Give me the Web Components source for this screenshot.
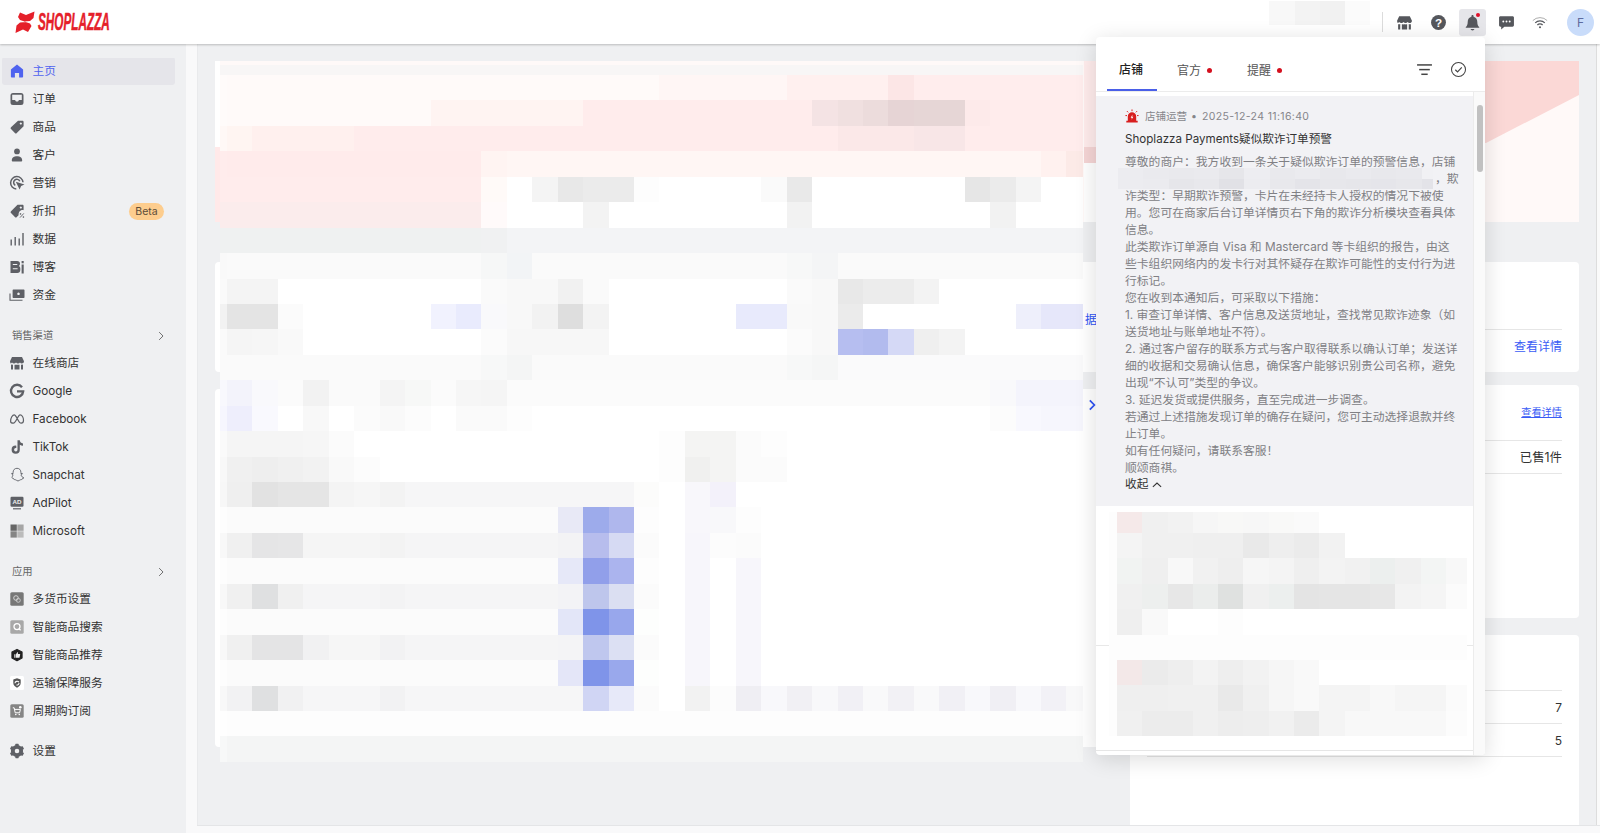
<!DOCTYPE html>
<html lang="zh-CN">
<head>
<meta charset="UTF-8">
<title>Shoplazza</title>
<style>
  html, body { margin: 0; height: 100%; overflow: hidden; }
  body { font: 12px/17px Inter, "Noto Sans CJK SC", sans-serif; color: #333; }
</style>
</head>
<body>
<sp-app>
  <sp-header slot="header"></sp-header>
  <sp-sidebar slot="sidebar">
    <sp-nav-item icon="home" active>主页</sp-nav-item>
    <sp-nav-item icon="orders">订单</sp-nav-item>
    <sp-nav-item icon="tag">商品</sp-nav-item>
    <sp-nav-item icon="person">客户</sp-nav-item>
    <sp-nav-item icon="marketing">营销</sp-nav-item>
    <sp-nav-item icon="discount">折扣<sp-badge slot="badge">Beta</sp-badge></sp-nav-item>
    <sp-nav-item icon="data">数据</sp-nav-item>
    <sp-nav-item icon="blog">博客</sp-nav-item>
    <sp-nav-item icon="funds">资金</sp-nav-item>
    <sp-nav-section>销售渠道</sp-nav-section>
    <sp-nav-item icon="store">在线商店</sp-nav-item>
    <sp-nav-item icon="google">Google</sp-nav-item>
    <sp-nav-item icon="meta">Facebook</sp-nav-item>
    <sp-nav-item icon="tiktok">TikTok</sp-nav-item>
    <sp-nav-item icon="snapchat">Snapchat</sp-nav-item>
    <sp-nav-item icon="adpilot">AdPilot</sp-nav-item>
    <sp-nav-item icon="microsoft">Microsoft</sp-nav-item>
    <sp-nav-section>应用</sp-nav-section>
    <sp-nav-item icon="currency">多货币设置</sp-nav-item>
    <sp-nav-item icon="search">智能商品搜索</sp-nav-item>
    <sp-nav-item icon="recommend">智能商品推荐</sp-nav-item>
    <sp-nav-item icon="shipping">运输保障服务</sp-nav-item>
    <sp-nav-item icon="subscribe">周期购订阅</sp-nav-item>
    <sp-nav-item icon="gear" class="settings">设置</sp-nav-item>
  </sp-sidebar>
  <sp-dashboard slot="main"></sp-dashboard>
  <sp-notice-popup slot="popup"></sp-notice-popup>
</sp-app>

<script>
// 图标，viewBox 都是 0 0 16 16
const gearTeeth = [0, 60, 120, 180, 240, 300].map(a => `<rect x="6.3" y=".8" width="3.4" height="3" rx=".6" transform="rotate(${a} 8 8)"/>`).join("");
const ICONS = {
  home: `<path d="M8 1.6 2.2 6.2a.8.8 0 0 0-.3.6v7c0 .5.3.8.8.8h3.2V10h4.2v4.6h3.2c.5 0 .8-.3.8-.8v-7a.8.8 0 0 0-.3-.6z"/>`,
  orders: `<path fill-rule="evenodd" d="M4 2h8a2.5 2.5 0 0 1 2.5 2.5v7A2.5 2.5 0 0 1 12 14H4a2.5 2.5 0 0 1-2.5-2.5v-7A2.5 2.5 0 0 1 4 2zM3.2 3.8V9H6l1 1.5h2L10 9h2.8V3.8z"/>`,
  tag: `<path fill-rule="evenodd" d="M9 1.8h4.4c.7 0 1.2.5 1.2 1.2v4.3L7.8 14a1.3 1.3 0 0 1-1.9 0L2 10.1a1.3 1.3 0 0 1 0-1.9zM11.8 3.4a1.1 1.1 0 1 0 .01 0z"/>`,
  person: `<circle cx="8" cy="4.4" r="2.9"/><path d="M2.8 13.4c0-2.9 2.3-4.2 5.2-4.2s5.2 1.3 5.2 4.2c0 .7-.5 1.1-1.1 1.1H3.900c-.6 0-1.100-.4-1.100-1.100z"/>`,
  marketing: `<path fill="none" stroke="currentColor" stroke-width="1.5" d="M7.300 14A6.200 6.200 0 1 1 14 7.300"/><path fill="none" stroke="currentColor" stroke-width="1.500" d="M6.300 10.300A3.200 3.200 0 1 1 10.800 6.300"/><path d="M6.800 6.800 15.500 9.600l-3.400 1.400-1.500 3.600z"/>`,
  discount: `<path d="M8.500 1.800h5c.6 0 1.100.5 1.100 1.100v4.300c-2.500-.6-5.300 1.400-5 5l-1.800 1.800a1.300 1.300 0 0 1-1.900 0L2 10.100a1.300 1.300 0 0 1 0-1.900zM11.800 3.400a1.100 1.100 0 1 0 .01 0z" fill-rule="evenodd"/><path fill="none" stroke="currentColor" stroke-width=".9" d="M11 14.600l3.800-4.200M11.200 10.600h.7v.7h-.7zM14 13.700h.7v.7H14z"/>`,
  data: `<rect x="1.500" y="8.500" width="1.400" height="6"/><rect x="5.500" y="6" width="1.400" height="8.500"/><rect x="9.500" y="7.500" width="1.400" height="7"/><rect x="13.300" y="2" width="1.400" height="12.500"/>`,
  blog: `<path fill-rule="evenodd" d="M1.500 2h6.700c1.700 0 2.800 1 2.800 2.800 0 1-.4 1.800-1.100 2.300.9.500 1.400 1.400 1.400 2.500v1.400c0 1.800-1.200 3-3 3H1.500zM3.800 5v1h4.500V5zM3.800 9.200v1h4.800v-1z"/><rect x="12.600" y="2" width="2.100" height="2.300"/><rect x="12.600" y="5.500" width="2.100" height="9"/>`,
  funds: `<path fill-rule="evenodd" d="M4.300 2.500h10.500c.4 0 .7.300.7.700v7.100c0 .4-.3.7-.7.7H4.300a.7.700 0 0 1-.7-.7V3.200c0-.4.300-.7.700-.7zM9.500 5.500a1.300 1.300 0 1 0 .01 0z"/><path fill="none" stroke="currentColor" stroke-width="1.100" d="M1 6.500v6.800h12.500"/>`,
  store: `<path d="M3 2h10l2 4.300c0 1.400-1.100 2.200-2.200 2.200-.8 0-1.400-.4-1.800-1-.5.600-1.200 1-2 1s-1.500-.4-2-1c-.4.600-1.100 1-2 1s-1.500-.4-2-1c-.4.600-1 1-1.800 1C2.100 8.500 1 7.700 1 6.300z"/><path d="M2 9.600c.6.200 1.300.2 2-.1v5H2zM12 9.500c.7.300 1.400.3 2 .1v4.900h-2zM5.500 9.700c.8.200 1.700.2 2.500 0 .8.200 1.700.2 2.500 0v4.800h-5z"/>`,
  google: `<path fill="none" stroke="currentColor" stroke-width="2.300" d="M13 4.200A6.100 6.100 0 1 0 14.200 8.300H8"/>`,
  meta: `<path fill="none" stroke="currentColor" stroke-width="1.200" d="M1.600 10.200C1.600 7 3.500 3.800 5.200 3.800c2.400 0 4 8.400 7 8.400 1.500 0 2.300-1.200 2.300-3 0-2.800-1.500-5.400-3.400-5.400-2.300 0-4 8.400-6.700 8.400-1.400 0-2.800-.6-2.800-2z"/>`,
  tiktok: `<path d="M8.500 1.300h2.300c.2 1.800 1.300 3 3.200 3.200v2.300c-1.200 0-2.300-.4-3.200-1v4.900a4.100 4.100 0 1 1-4.100-4.100l.6.100v2.400l-.6-.1a1.700 1.700 0 1 0 1.800 1.700z"/>`,
  snapchat: `<path fill="none" stroke="currentColor" stroke-width=".9" d="M8 1.300c2.500 0 3.900 1.800 3.900 4v1.300l1.400-.2c.4.600-.3 1-1.300 1.400.3 1.600 1.500 2.600 2.900 3-.2.800-1.200.8-1.900 1.100-.2.700-.5.900-1.300.8-1 0-1.600 1.300-2.700 1.300s-1.700-1.300-2.700-1.300c-.8.100-1.100-.1-1.300-.8-.7-.3-1.700-.3-1.900-1.100C2.500 10.400 3.700 9.400 4 7.800 3 7.400 2.300 7 2.700 6.400l1.400.2V5.300c0-2.200 1.400-4 3.900-4z"/>`,
  adpilot: `<rect x="1.500" y="1.800" width="13" height="10" rx="1.200"/><rect x="4" y="13.200" width="8" height="1.200"/><text x="8" y="9.200" text-anchor="middle" font-family="Liberation Sans" font-size="6.200" font-weight="700" fill="#eee">AD</text>`,
  microsoft: `<rect x="1.500" y="1.500" width="6.300" height="6.300" fill="#666"/><rect x="8.300" y="1.500" width="6.300" height="6.300" fill="#a5a5a5"/><rect x="1.500" y="8.300" width="6.300" height="6.300" fill="#858585"/><rect x="8.300" y="8.300" width="6.300" height="6.300" fill="#bbb"/>`,
  currency: `<rect x="1.300" y="1.300" width="13.400" height="13.400" rx="1.500" fill="#777"/><circle cx="7" cy="7" r="2.300" fill="none" stroke="#ddd" stroke-width=".9"/><circle cx="9.300" cy="9.300" r="2" fill="none" stroke="#ccc" stroke-width=".9"/>`,
  search: `<rect x="1.300" y="1.300" width="13.400" height="13.400" rx="1.500" fill="#a8a8a8"/><circle cx="8" cy="7.600" r="3" fill="none" stroke="#fff" stroke-width="1.300"/><path stroke="#fff" stroke-width="1.200" d="M10 9.800l1.600 1.500"/>`,
  recommend: `<path fill="#222" d="M8 2.500 13 5v6l-5 2.700L3 11V5z" stroke="#222" stroke-width="1.300" stroke-linejoin="round"/><path fill="#eee" d="M5.300 7.300h1.200v3.400H5.300zM7 7.300 8.300 5.200c.6 0 .9.400.7 1.100l-.2.700h2c.3 0 .5.300.4.600l-.7 2.800c-.1.200-.2.300-.5.300H7z"/>`,
  shipping: `<rect x="1" y="1" width="14" height="14" rx="1.500" fill="#fff"/><path fill="#555" d="M8 3.300l3.700 1.300v3.500c0 2.400-1.600 3.700-3.700 4.600-2.100-.9-3.700-2.200-3.700-4.600V4.600z"/><path fill="none" stroke="#fff" stroke-width="1.100" d="M6 8.300a2.100 2.100 0 0 1 3.900-1M10 8a2.100 2.100 0 0 1-2.600 2"/>`,
  subscribe: `<rect x="1.300" y="1.300" width="13.400" height="13.400" rx="1.500" fill="#858585"/><path fill="none" stroke="#fff" stroke-width="1" d="M3.800 4.800h1.400l1 5h4.400l.8-3.400H5.600"/><circle cx="6.800" cy="11.500" r=".8" fill="#fff"/><circle cx="10.300" cy="11.500" r=".8" fill="#fff"/><circle cx="11.300" cy="4.300" r="1.300" fill="#fff"/>`,
  gear: `${gearTeeth}<circle cx="8" cy="8" r="4.200" fill="none" stroke="currentColor" stroke-width="3.800"/>`,
  help: `<circle cx="8" cy="8" r="7"/><text x="8" y="12" text-anchor="middle" font-family="Liberation Sans" font-size="11" font-weight="700" fill="#fff">?</text>`,
  bell: `<path d="M8 1c.6 0 1 .4 1 1v.6c2.200.5 3.500 2.300 3.500 4.600 0 2.600.6 3.900 1.800 5.100.2.300 0 .7-.3.700H2c-.3 0-.5-.4-.3-.7C2.900 11.100 3.500 9.800 3.500 7.200 3.500 4.900 4.800 3.100 7 2.600V2c0-.6.400-1 1-1z"/><path d="M6.200 14.200h3.600c-.2.800-.9 1.300-1.800 1.300s-1.600-.5-1.800-1.300z"/>`,
  chat: `<path d="M2.300 2h11.400c.7 0 1.300.6 1.300 1.300v7.400c0 .7-.6 1.300-1.300 1.300H6l-3 2.700V12h-.7C1.600 12 1 11.400 1 10.700V3.300C1 2.600 1.600 2 2.300 2z"/><circle cx="5" cy="7" r=".9" fill="#fff"/><circle cx="8" cy="7" r=".9" fill="#fff"/><circle cx="11" cy="7" r=".9" fill="#fff"/>`,
  wifi: `<g fill="none" stroke="currentColor"><path stroke-width=".8" stroke="#999" d="M.8 6.600a10.200 10.200 0 0 1 14.400 0"/><path stroke-width="1.200" d="M3.200 8.800a6.800 6.800 0 0 1 9.600 0"/><path stroke-width="1.300" d="M5.400 11a3.600 3.600 0 0 1 5.200 0"/></g><circle cx="8" cy="13.200" r="1"/>`,
  filter: `<rect x="1" y="3" width="14" height="1.400"/><rect x="3" y="7.400" width="10" height="1.400"/><rect x="5" y="11.800" width="6" height="1.400"/>`,
  done: `<circle cx="8" cy="8" r="6.600" fill="none" stroke="currentColor" stroke-width="1"/><path fill="none" stroke="currentColor" stroke-width="1.100" d="M5 8.200l2.100 2.100 4-4.300"/>`,
  alarm: `<path fill="#d81e1e" d="M3.200 14V8.500a4.800 4.800 0 0 1 9.600 0V14zM1.500 13.500h13V15.500h-13z"/><path fill="#fff" d="M8.500 6.300 6.500 10h1.400l-.4 2.300 2-3.500H8.200z"/><path stroke="#d81e1e" stroke-width="1.100" d="M8 .5v2M2.200 2.400l1.400 1.400M13.800 2.400l-1.400 1.400M.5 7.500h1.800M13.700 7.500h1.800"/>`,
  chevronRight: `<path fill="none" stroke="currentColor" stroke-width="1.100" d="M5.500 2.800 10.700 8l-5.200 5.200"/>`,
  chevronUp: `<path fill="none" stroke="currentColor" stroke-width="1.500" d="M2.500 10.500 8 5.500l5.500 5"/>`,
};

function svgIcon(name, size) {
  return `<svg viewBox="0 0 16 16" width="${size}" height="${size}" fill="currentColor" aria-hidden="true">${ICONS[name]}</svg>`;
}

// 基础类：把模板写进 open shadow root
class ShadowBase extends HTMLElement {
  constructor() {
    super();
    this.attachShadow({ mode: "open" });
  }
}

// 打码块，rows 里每行 "颜色*格数" 用空格隔开
const MOSAICS = {
  main: {
    cols: "7px repeat(33, 25.45px) 17px",
    rows: "10px repeat(27, 25.44px)",
    data: [
      "f8f6f6 f8f6f6*34",
      "fffbfa fffaf9*17 fff6f5*5 fff0ef*4 fce6e6 ffeded*7",
      "fffbfa fffaf9*8 fff4f2*6 ffecec*9 f4e3e4 f0e0e0 ecdcdc e6d4d5 e6d6d6*2 fdeaea ffecec*4",
      "fff8f6 fff5f2 fff0ee*4 ffecec*19 fbe8e8*3 f8e6e7*2 ffecec*5",
      "ffecec ffebeb*10 fff4f2 fff6f4*21 fff1ef fceae7",
      "ffecec ffecec*10 fffaf8 ffffff f4f4f4 e8e8e8 ebebeb*2 fdfdfd ffffff*4 fafafa e9e9e9 ffffff*6 e6e6e6 ebebeb f4f4f4 ffffff*2",
      "fbecec fbecec*10 fffafa ffffff*3 f3f3f3 ffffff*7 f2f2f2 ffffff*7 f2f2f2 ffffff*3",
      "eff1f1 eff1f1*10 f0f1f2 f3f4f6*23",
      "f9f9f9 fafafa*10 f6f7f7 f2f4f6 fafafa*10 f7f8f8 f4f5f6 fafafa*10",
      "fafafa f4f4f4*2 ffffff*8 fafafa f8f8f8*2 f1f1f1 fafafa ffffff*7 fafafa f8f8f8 e8e8e8 ececec*2 f3f3f3 ffffff*6",
      "f2f2f2 e4e4e4*2 fbfbfb ffffff*5 f1f2fe e9ebfd f9f9fb f8f8f8 f2f2f2 dedede f3f3f3 ffffff*5 e8eafc*2 f9f9f9 f8f8f8 ebebeb ffffff*6 eeeffb e6e7fa*2",
      "fafafa f5f5f5 f6f6f6 f9f9f9 ffffff*7 fbfbfb f7f7f7*4 ffffff*7 fbfbfb f8f8f8 b6bef0 b2bbee d5d9f6 efefef f3f3f3 ffffff*5",
      "fafafa fafafa*10 f7f8f8 f4f5f5 fafafa*10 f7f8f8 f5f6f6 fafafb*10",
      "f8f8fd f3f3fb f9f9fc fbfbfb f2f2f2 fafafa*2 f4f4f4 f7f8f7 fbfbfb f6f6f6 f5f5f5 fbfbfb*19 f9f9fb f4f4fc*3",
      "f6f6fe eeeefc f9f9fe ffffff f8f8f8 ffffff fbfbfb f9f9f9 fcfcfc ffffff fafafa*2 fdfdfd ffffff*18 fcfcfc f8f8fe f6f6fd*2",
      "fafafa f5f5f5*3 f6f6f6 fbfbfb ffffff*12 fdfdfd f4f4f3*2 fbfbfb fdfdfd ffffff*12",
      "f8f8f8 f0f0f0 eeeeee f0f0f0 f2f2f2 f9f9f9 fcfcfc ffffff*11 fdfdfd f0f0ef f4f4f3 fbfbfb*2 ffffff*12",
      "f7f7f7 efefef e2e2e2 e5e5e5*2 f4f4f4 f6f6f6 f3f3f3 f6f6f7*9 fcfcfb ffffff f8f7fb f3f1fa ffffff*14",
      "fdfdfd fbfbfb*13 e8e9f6 9dabeb afb7ed fdfdfd ffffff f8f7fb f8f8fa fdfdfd ffffff*13",
      "f8f8f8 f0f0f0 e5e5e6 e6e6e7 f5f5f5*3 f3f3f3 f5f5f6*6 f3f3f5 b7bded d6daf3 fbfbfb ffffff f7f6fb fcfcfc fbfbfb ffffff*13",
      "fdfdfd fbfbfb*13 e6e8f8 919fea abb4ee fdfdfd ffffff f7f6fb ffffff f7f6fb ffffff*13",
      "f8f8f8 f0f0f0 dfe0e1 f0f0f0 f5f5f6*3 f3f3f4 f5f5f6*6 f3f3f6 bec6ec dbdff2 fbfbfb ffffff f7f6fb ffffff f7f6fb ffffff*13",
      "fdfdfd fbfbfb*13 e3e6f8 7f94e9 98a7ec fdfefd ffffff f7f6fb ffffff f7f6fb ffffff*13",
      "f8f8f8 f0f0f0 e4e4e5*2 f1f1f2 f6f6f6*2 f2f2f3 f5f5f6*6 f4f4f6 bfc7ee dce0f3 fbfbfb ffffff f7f6fb ffffff f7f6fb ffffff*13",
      "fdfdfd fbfbfb*13 e4e6f8 7f94e9 99a8ec fdfefd ffffff f7f6fb ffffff f7f6fb ffffff*13",
      "f8f8f8 f2f2f3 dfe0e1 f1f1f2 f6f6f7*3 f2f2f3 f6f6f7*7 d0d5f4 e7e9f9 fbfbfb ffffff f2f2f2 fcfcfc efeef3 f8f8fb f1f0f4 f8f8fa f1f0f5 f9f9fa f2f1f5 f9f9fa f1f0f5 f8f8fb f0eff4 f8f8fb f2f1f6 f8f8f9",
      "fefefe fdfdfd*34",
      "f7f8f8 f4f5f5*34",
    ],
  },
  notices: {
    cols: "8px repeat(13, 25.3px) 21px",
    rows: "21px repeat(8, 25.4px)",
    data: [
      "fdfdfd f5e9e9 f0f0f0 f2f2f2 f6f6f6 f8f8f7 f7f7f7 f9f9f8 fafafa",
      "fdfdfd f4f4f4 f0f0f0*2 efefef*2 e9e9e9 eeeeee ebebeb f2f2f2",
      "fdfdfd f1f3f2 efefef f8f8f8 f1f1f1 eeeeee f6f6f6 f4f4f4 efefef f3f3f3 f1f1f1 ecefee f0f0f0 f3f5f4 f8f8f8",
      "fdfdfd f0f0f0 edefee e7e7e7 ebedec dfe1e0 f0f0f0 ecefee e4e4e4 e5e5e5*2 e7e7e7 f3f3f3 f5f5f5 fbfbfb",
      "fdfdfd efefef f9f9f9 ffffff*2 fdfdfd ffffff*9",
      "fdfdfd fdfdfd*14",
      "fdfdfd f3e8e8 ebebeb eeeeee f3f3f3 eeeeee f2f2f2 f6f6f6 f9f9f9",
      "fdfdfd efefef*2 f0f0f0*2 e9e9e9 f0f0f0 f6f6f6 f9f9f9 f4f4f4*2 f8f8f8 f5f5f5*2 fbfbfb",
      "fdfdfd f0f0f0 ececec*2 f0f0f0 ededed eeeeee f1f1f1 ebebeb f4f4f4 f8f8f8*4 fcfcfc",
    ],
  },
  account: {
    cols: "repeat(4, 25.25px)",
    rows: "24px",
    data: ["f8f8f8 f3f3f3 f1f1f1 fbfbfb"],
  },
  redact: {
    cols: "repeat(12, 25.3px) 11px",
    rows: "10.500px 10.500px",
    data: [
      "ececf0 eaeaee e9e9ed eaeaee e6e6ea ededf1 e9e9ed ebebef e8e8ec eaeaee e8e8ec e9e9ed f1f1f4",
      "ececf0 ebebef e6e6ea e8e8ec e1e1e6 ececf0 e8e8ec e4e4e9 e7e7eb e6e6ea e5e5ea e7e7eb e3e3e8",
    ],
  },
};

class SpMosaic extends ShadowBase {
  connectedCallback() {
    const set = MOSAICS[this.getAttribute("set")];
    const cells = set.data.map(row => {
      const parts = row.split(" ").map(p => {
        const [color, span] = p.split("*");
        return `<i style="background:#${color};grid-column:span ${span || 1}"></i>`;
      }).join("");
      return `<b>${parts}</b>`;
    }).join("");
    this.shadowRoot.innerHTML = `
      <style>
        :host { display: block; width: fit-content; }
        .grid { display: grid; grid-template-rows: ${set.rows}; }
        b { display: grid; grid-template-columns: ${set.cols}; }
        i { display: block; }
      </style>
      <div class="grid">${cells}</div>`;
  }
}
customElements.define("sp-mosaic", SpMosaic);

// 整体外壳
class SpApp extends ShadowBase {
  connectedCallback() {
    this.shadowRoot.innerHTML = `
      <style>
        :host { display: grid; position: relative; height: 833px; overflow: hidden;
                grid-template-columns: 186px 1fr; grid-template-rows: 44px 1fr; background: #eff0f2; }
        .header { grid-column: 1 / 3; z-index: 2; }
      </style>
      <div class="header"><slot name="header"></slot></div>
      <slot name="sidebar"></slot>
      <slot name="main"></slot>
      <slot name="popup"></slot>`;
  }
}
customElements.define("sp-app", SpApp);

// 顶栏
class SpHeader extends ShadowBase {
  connectedCallback() {
    this.shadowRoot.innerHTML = `
      <style>
        :host { display: flex; align-items: center; height: 44px; box-sizing: border-box; padding: 0 6px 0 15px;
                background: #fff; box-shadow: 0 1px 2px rgba(0,0,0,.22); color: #55575c; }
        .mark { display: block; margin-right: 3px; }
        .word { width: 71px; font: italic 700 23.500px/24px "Liberation Sans", sans-serif; color: #e5202a;
                -webkit-text-stroke: .5px #e5202a; white-space: nowrap; transform: scaleX(.5); transform-origin: left center; }
        .account { margin: 0 12px 18px auto; }
        .sep { width: 1px; height: 20px; background: #dcdcdc; margin-right: 8px; }
        .btn { width: 27px; height: 27px; margin-right: 6.750px; display: flex; align-items: center; justify-content: center;
               border-radius: 3px; position: relative; }
        .btn.on { background: #e6e6ea; }
        .btn.on::after { content: ""; position: absolute; top: 4px; right: 6px; width: 4px; height: 4px;
                         border-radius: 50%; background: #e0102a; }
        .avatar { width: 27px; height: 27px; margin-left: 7px; border-radius: 50%; background: #c9dcfa; color: #5d6b9e;
                  text-align: center; font-size: 12px; line-height: 27px; }
      </style>
      <svg class="mark" width="20" height="22" viewBox="0 0 20 22" fill="#e5202a"><path d="M5 1.500 11 4 19.500.5 18.500 7 15 10 9 10.500 15 12.500 16.500 15 13 21 8 18.500.5 22 1.500 14.500 5 11.500 11 11 5 9 3 6z"/></svg>
      <div class="word">SHOPLAZZA</div>
      <sp-mosaic class="account" set="account"></sp-mosaic>
      <div class="sep"></div>
      <div class="btn">${svgIcon("store", 17)}</div>
      <div class="btn">${svgIcon("help", 17)}</div>
      <div class="btn on">${svgIcon("bell", 17)}</div>
      <div class="btn">${svgIcon("chat", 17)}</div>
      <div class="btn">${svgIcon("wifi", 16)}</div>
      <div class="avatar">F</div>`;
  }
}
customElements.define("sp-header", SpHeader);

// 侧边栏
class SpSidebar extends ShadowBase {
  connectedCallback() {
    this.shadowRoot.innerHTML = `
      <style>
        :host { display: block; height: 789px; box-sizing: border-box; padding-top: 13px; background: #eff0f2; }
      </style>
      <slot></slot>`;
  }
}
customElements.define("sp-sidebar", SpSidebar);

class SpNavItem extends ShadowBase {
  connectedCallback() {
    const active = this.hasAttribute("active");
    const top = this.classList.contains("settings") ? 12 : 0;
    this.shadowRoot.innerHTML = `
      <style>
        :host { display: block; height: 28px; margin-top: ${top}px; box-sizing: border-box; padding-left: 2px; }
        .row { display: flex; align-items: center; width: 173px; height: 28px; box-sizing: border-box; padding: 0 11px 0 7px;
               border-radius: 3px; font-size: 11.700px; color: ${active ? "#4f63ef" : "#333"};
               background: ${active ? "linear-gradient(#e5e5ea, #e5e5ea) 0 1px / 100% 27px no-repeat" : "none"}; }
        .icon { width: 16px; height: 16px; margin-right: 7.500px; color: ${active ? "#4f63ef" : "#5e6066"}; }
        svg { display: block; }
        ::slotted([slot=badge]) { margin-left: auto; }
      </style>
      <div class="row">
        <span class="icon">${svgIcon(this.getAttribute("icon"), 16)}</span>
        <slot></slot>
        <slot name="badge"></slot>
      </div>`;
  }
}
customElements.define("sp-nav-item", SpNavItem);

class SpBadge extends ShadowBase {
  connectedCallback() {
    this.shadowRoot.innerHTML = `
      <style>
        :host { display: block; width: 35px; height: 17px; border-radius: 9px; background: #fdcd8e;
                color: #5c4c38; font-size: 10.500px; line-height: 17px; text-align: center; }
      </style>
      <slot></slot>`;
  }
}
customElements.define("sp-badge", SpBadge);

class SpNavSection extends ShadowBase {
  connectedCallback() {
    this.shadowRoot.innerHTML = `
      <style>
        :host { display: flex; align-items: center; height: 27px; margin-top: 13px; padding: 0 19px 0 12px;
                font-size: 10.300px; color: #666; }
        svg { margin-left: auto; display: block; color: #555; }
      </style>
      <slot></slot>${svgIcon("chevronRight", 12)}`;
  }
}
customElements.define("sp-nav-section", SpNavSection);

// 主内容区，大部分被打码块盖住
class SpDashboard extends ShadowBase {
  connectedCallback() {
    this.shadowRoot.innerHTML = `
      <style>
        :host { display: grid; position: relative; height: 789px; overflow: hidden; border-left: 11px solid #f9f9fa;
                grid-template-rows: 1fr 8px; background: #eff0f2; }
        .content { padding: 17px 21px 0 18px; min-height: 0; overflow: hidden; box-shadow: inset 1px 0 0 #e9eaec, inset -3px 0 0 #fafafa, inset -4px 0 0 #ddd; }
        .hero { height: 161px; margin-bottom: 40px; position: relative; background-color: #fff9f8;
                background-image: linear-gradient(#fff 0 86px, #ffe9e9 86px), linear-gradient(#ffecec 0 86px, #f5d5d5 86px 102px, #fff 102px);
                background-size: 5px 100%, 12px 100%; background-position: 0 0, 869px 0; background-repeat: no-repeat; }
        .hero::before { content: ""; position: absolute; inset: 0; background: #fbd8d6;
                clip-path: polygon(881px 0, 100% 0, 100% 34px, 1271px 82px, 881px 82px); }
        .columns { display: grid; grid-template-columns: 896px 449px; column-gap: 19px; align-items: start; }
        .col { display: flex; flex-direction: column; }
        .card { background: #fff; border-radius: 4px; box-sizing: border-box; }
        .left1 { height: 110px; margin-bottom: 17px; display: flex; justify-content: flex-end; padding: 49px 14px 0 0; color: #2f54f5; }
        .left2 { height: 358px; display: flex; justify-content: flex-end; padding: 9px 12px 0 0; color: #2f54f5; }
        .left2 svg path { stroke-width: 2; }
        .r1 { height: 110px; margin-bottom: 13px; padding: 67px 17px 0; }
        .r2 { height: 233px; margin-bottom: 17px; padding: 8px 17px 0; }
        .r3 { height: 210px; padding: 55px 17px 0; }
        .line { border-top: 1px solid #e6e6e6; display: flex; justify-content: flex-end; align-items: center; height: 32px; }
        .link { color: #3a5cf5; }
        .sm { font-size: 10.200px; text-decoration: underline; }
        .sold { font-size: 12.400px; }
        .top { height: 38px; margin-bottom: 9px; display: flex; justify-content: flex-end; align-items: center; }
        .bar { background: #f9f9fa; border-top: 1px solid #e4e5e7; }
        sp-mosaic { position: absolute; left: 23px; top: 21px; }
      </style>
      <div class="content">
        <div class="hero"></div>
        <div class="columns">
          <div class="col">
            <div class="card left1">据</div>
            <div class="card left2">${svgIcon("chevronRight", 14)}</div>
          </div>
          <div class="col">
            <div class="card r1"><div class="line"><span class="link">查看详情</span></div></div>
            <div class="card r2">
              <div class="top"><span class="link sm">查看详情</span></div>
              <div class="line sold">已售1件</div>
              <div class="line"></div>
            </div>
            <div class="card r3">
              <div class="line">7</div>
              <div class="line">5</div>
              <div class="line"></div>
            </div>
          </div>
        </div>
      </div>
      <div class="bar"></div>
      <sp-mosaic set="main"></sp-mosaic>`;
  }
}
customElements.define("sp-dashboard", SpDashboard);

// 通知弹层
class SpNoticeCard extends ShadowBase {
  connectedCallback() {
    this.shadowRoot.innerHTML = `
      <style>
        :host { display: block; height: 410px; box-sizing: border-box; padding: 12px 0 0 29px; background: #f2f2f5; color: #808084; position: relative; }
        .meta { display: flex; align-items: center; height: 16px; font-size: 10.500px; color: #85858a; }
        .meta svg { margin-right: 6px; display: block; }
        .dot { margin: 0 5px 0 4px; }
        .date { letter-spacing: .36px; }
        .title { margin: 7px 0 7px; height: 16px; font-size: 11.600px; line-height: 16px; color: #333; white-space: nowrap; }
        .text { font-size: 11.800px; line-height: 17px; white-space: nowrap; }
        .masked { height: 17px; padding-left: 310px; }
        sp-mosaic { position: absolute; left: 22px; top: 72px; }
        .fold { display: flex; align-items: center; height: 17px; margin-top: -1px; color: #333; font-size: 11.700px; }
        .fold svg { margin-left: 3px; }
      </style>
      <div class="meta">${svgIcon("alarm", 14)}店铺运营<span class="dot">•</span><span class="date">2025-12-24 11:16:40</span></div>
      <div class="title">Shoplazza Payments疑似欺诈订单预警</div>
      <div class="text">
        尊敬的商户：我方收到一条关于疑似欺诈订单的预警信息，店铺
        <div class="masked">，欺</div>
        诈类型：早期欺诈预警，卡片在未经持卡人授权的情况下被使<br>
        用。您可在商家后台订单详情页右下角的欺诈分析模块查看具体<br>
        信息。<br>
        此类欺诈订单源自 Visa 和 Mastercard 等卡组织的报告，由这<br>
        些卡组织网络内的发卡行对其怀疑存在欺诈可能性的支付行为进<br>
        行标记。<br>
        您在收到本通知后，可采取以下措施：<br>
        1. 审查订单详情、客户信息及送货地址，查找常见欺诈迹象（如<br>
        送货地址与账单地址不符）。<br>
        2. 通过客户留存的联系方式与客户取得联系以确认订单；发送详<br>
        细的收据和交易确认信息，确保客户能够识别贵公司名称，避免<br>
        出现“不认可”类型的争议。<br>
        3. 延迟发货或提供服务，直至完成进一步调查。<br>
        若通过上述措施发现订单的确存在疑问，您可主动选择退款并终<br>
        止订单。<br>
        如有任何疑问，请联系客服！<br>
        顺颂商祺。
      </div>
      <div class="fold">收起${svgIcon("chevronUp", 12)}</div>
      <sp-mosaic set="redact"></sp-mosaic>`;
  }
}
customElements.define("sp-notice-card", SpNoticeCard);

class SpNoticePopup extends ShadowBase {
  connectedCallback() {
    this.shadowRoot.innerHTML = `
      <style>
        :host { position: absolute; left: 1096px; top: 37px; z-index: 3; width: 389px; height: 718px; display: flex; flex-direction: column;
                background: #fff; border-radius: 4px; box-shadow: 0 4px 22px rgba(0,0,0,.14); overflow: hidden; }
        .tabs { display: flex; height: 55px; box-sizing: border-box; padding: 0 0 0 11px; border-bottom: 1px solid #ececec; color: #555; flex: none; }
        .tab { display: flex; align-items: center; height: 54px; padding: 13px 14px 0 12px; margin-right: 8px; box-sizing: border-box; }
        .tab.on { color: #222; font-weight: 500; border-bottom: 2px solid #4a5fe8; }
        .tab i { width: 5px; height: 5px; border-radius: 50%; background: #d4101e; margin: 0 1px 0 6px; }
        .tools { margin-left: auto; display: flex; align-items: center; padding: 11px 18px 0 0; gap: 17px; color: #444; }
        .tools svg { display: block; }
        .body { flex: 1; display: flex; min-height: 0; }
        .list { width: 377px; padding-top: 4px; box-sizing: border-box; }
        .more { display: block; height: 245px; padding: 6px 0 0 13px; box-sizing: border-box;
                background: linear-gradient(#e8e8e8, #e8e8e8) 0 139px / 100% 1px no-repeat; border-bottom: 1px solid #e6e6e6; }
        .track { width: 12px; background: #fafafa; border-left: 1px solid #ececec; box-sizing: border-box; padding: 13px 2px 0 3px; }
        .thumb { height: 67px; border-radius: 3px; background: #c1c1c1; }
      </style>
      <div class="tabs">
        <div class="tab on">店铺</div>
        <div class="tab">官方<i></i></div>
        <div class="tab">提醒<i></i></div>
        <div class="tools">${svgIcon("filter", 17)}${svgIcon("done", 17)}</div>
      </div>
      <div class="body">
        <div class="list">
          <sp-notice-card></sp-notice-card>
          <div class="more"><sp-mosaic set="notices"></sp-mosaic></div>
        </div>
        <div class="track"><div class="thumb"></div></div>
      </div>`;
  }
}
customElements.define("sp-notice-popup", SpNoticePopup);
</script>
</body>
</html>
